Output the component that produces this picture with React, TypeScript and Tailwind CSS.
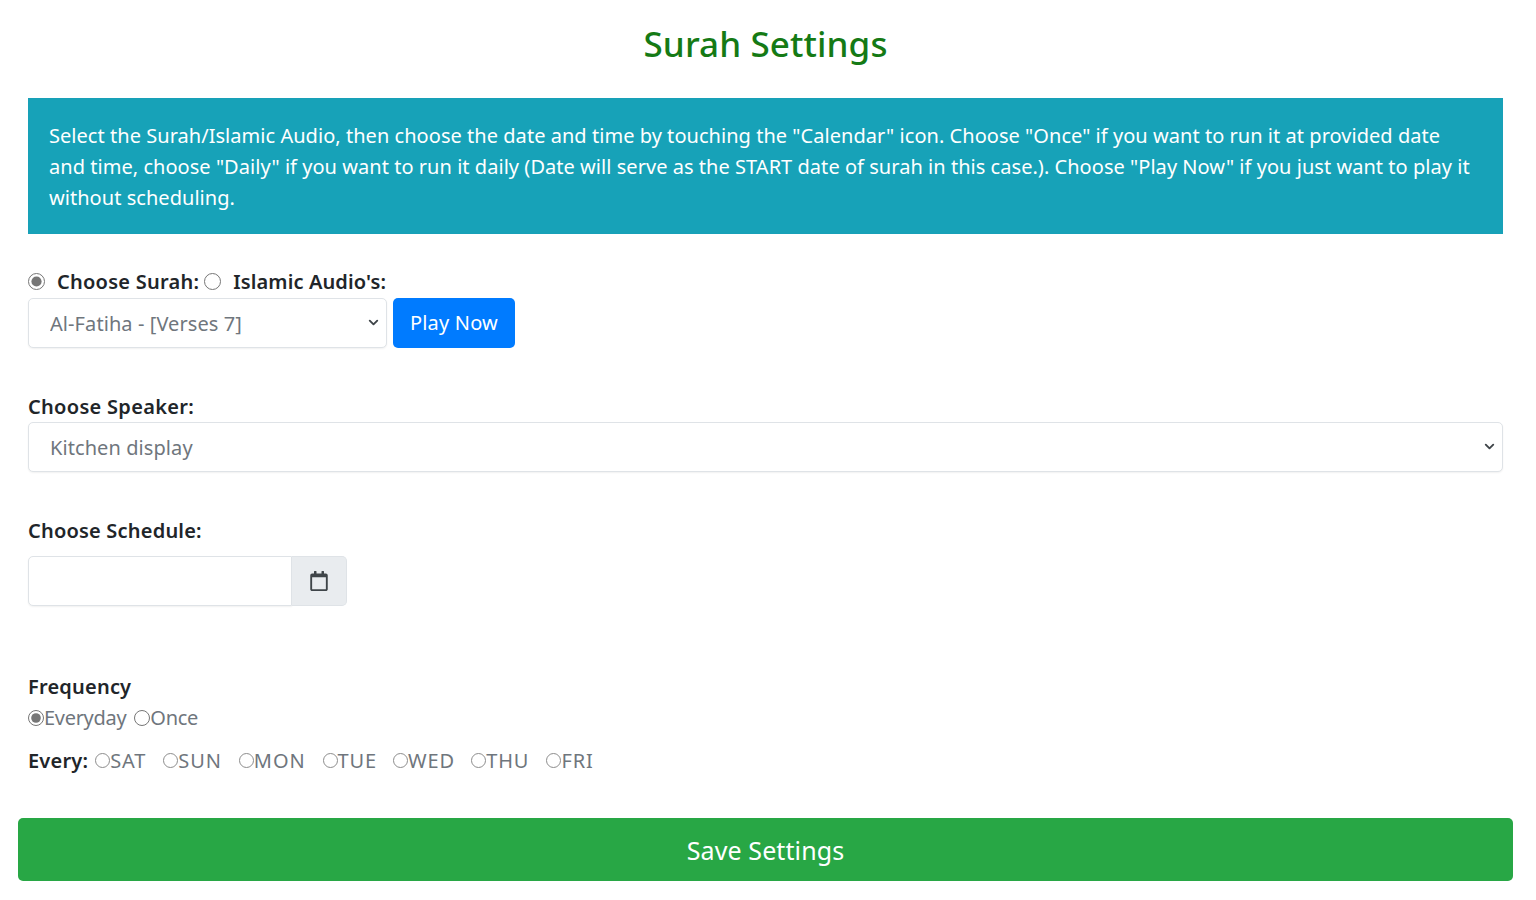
import { ChevronDown } from "lucide-react";
import { FaRegCalendar } from "react-icons/fa";

const days = [
  { label: "SAT", mr: "mr-[17px]" },
  { label: "SUN", mr: "mr-[17px]" },
  { label: "MON", mr: "mr-[17px]" },
  { label: "TUE", mr: "mr-[16px]" },
  { label: "WED", mr: "mr-[16px]" },
  { label: "THU", mr: "mr-[17px]" },
  { label: "FRI", mr: "" },
];

function Select({ label, className }: { label: string; className: string }) {
  return (
    <div className={`relative ${className}`}>
      <select className="h-[50px] w-full appearance-none rounded-[5px] border border-[#dfe3e7] bg-white pt-[2px] pl-[21px] text-[20px] tracking-[0.08px] text-[#6f767d] shadow-[0_1px_2px_rgba(0,0,0,0.06)] outline-none">
        <option>{label}</option>
      </select>
      <ChevronDown size={15} strokeWidth={3} className="pointer-events-none absolute top-[17px] right-[6px] text-[#3f4549]" />
    </div>
  );
}

export default function App() {
  return (
    <div
      className="h-[900px] overflow-hidden bg-white pr-[33px] pl-[28px] text-[#212529]"
      style={{ fontFamily: '"Noto Sans", "Open Sans", sans-serif' }}
    >
      <h1 className="flex h-[98px] items-center justify-center pb-[10px] text-[35px] font-medium tracking-[0.1px] text-[#157a15]">
        Surah Settings
      </h1>

      <div className="h-[136px] border border-[#18a0b8] bg-[#17a2b8] py-[21px] pr-[23px] pl-[20px] text-[20px] leading-[31px] tracking-[0.04px] text-white">
        Select the Surah/Islamic Audio, then choose the date and time by touching the "Calendar" icon. Choose "Once" if you want to run it at provided date
        and time, choose "Daily" if you want to run it daily (Date will serve as the START date of surah in this case.). Choose "Play Now" if you just want to play it
        without scheduling.
      </div>

      <div className="mt-[33px] flex h-[31px] items-center pb-[2px] text-[20px] font-semibold tracking-[0.25px]">
        <input type="radio" name="kind" defaultChecked className="m-0 mr-[12px] h-[17px] w-[17px] accent-[#767676]" />
        <span className="mr-[5px]">Choose Surah:</span>
        <input type="radio" name="kind" className="m-0 mr-[12px] h-[17px] w-[17px]" />
        <span className="tracking-[0.12px]">Islamic Audio's:</span>
      </div>
      <div className="flex gap-[6px]">
        <Select label="Al-Fatiha - [Verses 7]" className="w-[359px]" />
        <button className="h-[50px] w-[122px] rounded-[5px] bg-[#007bff] text-[20px] tracking-[0.2px] text-white">
          Play Now
        </button>
      </div>

      <div className="mt-[43px] h-[31px] text-[20px] leading-[31px] font-semibold tracking-[0.3px]">Choose Speaker:</div>
      <Select label="Kitchen display" className="w-full" />

      <div className="mt-[43px] h-[31px] text-[20px] leading-[31px] font-semibold tracking-[0.2px]">Choose Schedule:</div>
      <div className="mt-[10px] flex h-[50px] w-[319px]">
        <input className="w-[264px] rounded-l-[5px] border border-[#dfe3e7] bg-white shadow-[0_1px_2px_rgba(0,0,0,0.06)] outline-none" />
        <div className="flex w-[55px] items-center justify-center rounded-r-[5px] border border-l-0 border-[#dfe3e7] bg-[#e9ecef] text-[#3f4549]">
          <FaRegCalendar size={20} />
        </div>
      </div>

      <div className="mt-[66px] h-[31px] text-[20px] leading-[30px] font-semibold tracking-[0.2px]">Frequency</div>
      <div className="flex h-[31px] items-center pb-[2px] text-[20px] tracking-[-0.3px] text-[#6f767d]">
        <input type="radio" name="freq" defaultChecked className="m-0 h-[16px] w-[16px] accent-[#767676]" />
        <span className="mr-[8px]">Everyday</span>
        <input type="radio" name="freq" className="m-0 h-[16px] w-[16px]" />
        <span>Once</span>
      </div>

      <div className="mt-[12px] flex h-[31px] items-center pb-[2px] text-[20px] tracking-[0.9px] text-[#6f767d]">
        <span className="mr-[7px] font-semibold tracking-[0.2px] text-[#212529]">Every:</span>
        {days.map((d) => (
          <label key={d.label} className={`flex items-center ${d.mr}`}>
            <input type="checkbox" className="m-0 h-[15px] w-[15px] appearance-none rounded-full border border-[#8d8d8d]" />
            <span>{d.label}</span>
          </label>
        ))}
      </div>

      <button className="mx-[-10px] mt-[41px] h-[63px] w-[calc(100%+20px)] rounded-[5px] bg-[#28a745] pt-[2px] text-[25px] tracking-[0.1px] text-white">
        Save Settings
      </button>
    </div>
  );
}
